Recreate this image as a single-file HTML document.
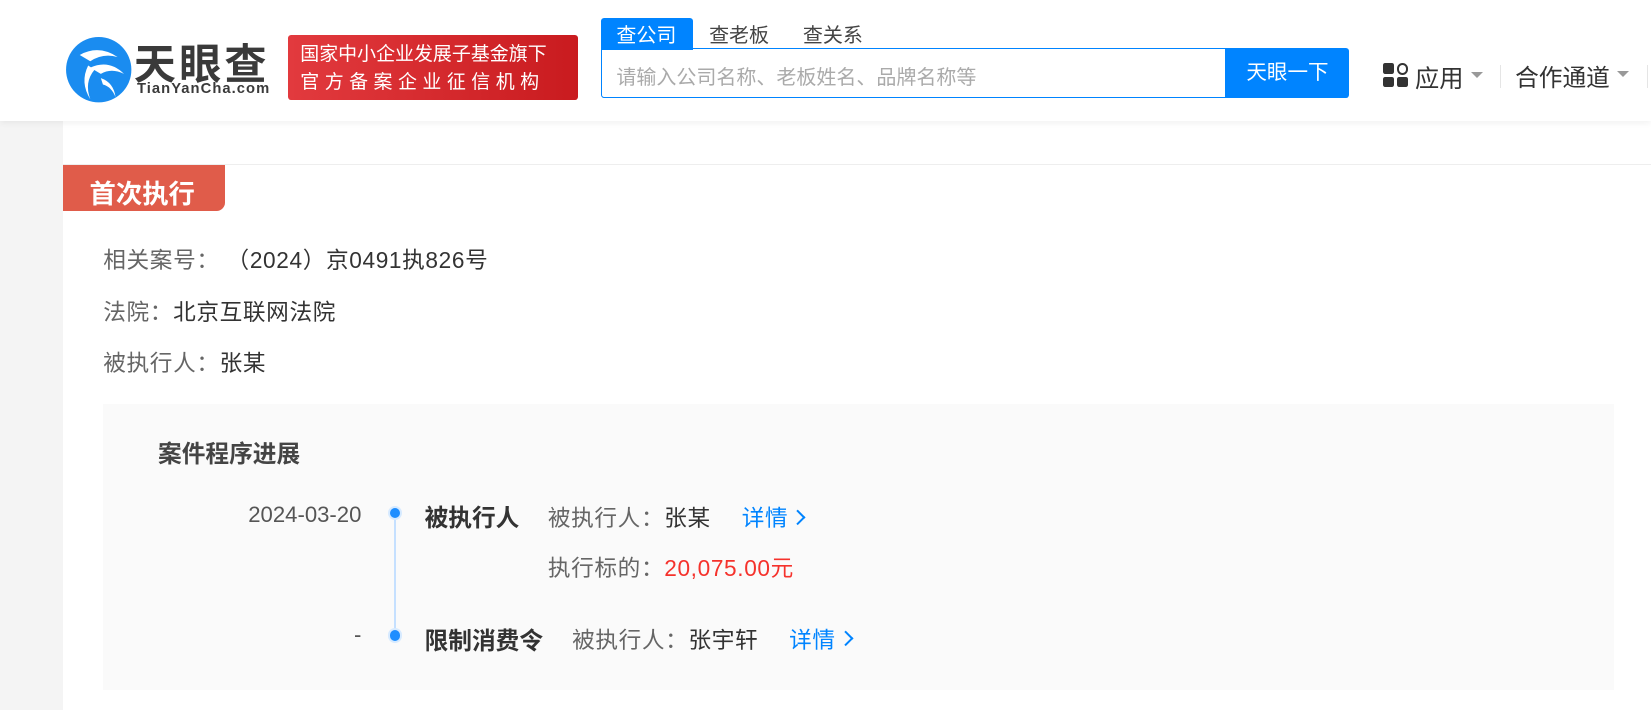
<!DOCTYPE html>
<html><head><meta charset="utf-8"><style>
html,body{margin:0;padding:0;width:1651px;height:710px;overflow:hidden;background:#fff}
#w{position:relative;width:1567px;height:674px;zoom:1.0536;font-family:"Liberation Sans","Noto Sans CJK SC",sans-serif;color:#333}
.a{position:absolute;white-space:nowrap}
.t{font-size:21.5px;letter-spacing:.6px}
.chev{display:inline-block;width:9px;height:9px;border-right:2px solid #0084ff;border-top:2px solid #0084ff;transform:rotate(45deg);margin-left:4px;vertical-align:3px}
</style></head><body><div id="w">
<div class="a" style="left:0;top:115px;width:60px;height:560px;background:#f4f4f4"></div>
<div class="a" style="left:0;top:0;width:1567px;height:115px;background:#fff;box-shadow:0 2px 6px rgba(0,0,0,.06)"></div>
<div class="a" style="left:60px;top:156px;width:1507px;height:1px;background:#eee"></div>
<!-- logo -->
<svg class="a" style="left:62px;top:34px" width="66" height="64" viewBox="0 0 66 64">
<circle cx="32" cy="32" r="31" fill="#1a8cf0"/>
<path d="M14 18 Q32 8 50 20 Q36 16 24 24 Z" fill="#fff"/>
<path d="M24 30 Q42 22 56 36 Q44 30 34 36 Z" fill="#fff"/>
<path d="M22 28 Q14 44 24 60 Q18 44 28 32 Z" fill="#fff"/>
<path d="M34 40 Q46 44 48 58 Q44 48 36 46 Z" fill="#fff"/>
</svg>
<div class="a" style="left:127px;top:29px;font-size:40px;font-weight:bold;color:#3a3a3a;letter-spacing:3px">天眼查</div>
<div class="a" style="left:130px;top:77px;font-size:14px;font-weight:bold;color:#3a3a3a;letter-spacing:1px">TianYanCha.com</div>
<div class="a" style="left:273px;top:33px;width:276px;height:62px;border-radius:3px;background:linear-gradient(90deg,#e23a3e,#c91b1f)"></div>
<div class="a" style="left:285px;top:37px;font-size:18px;color:#fff">国家中小企业发展子基金旗下</div>
<div class="a" style="left:285px;top:64px;font-size:18px;color:#fff;letter-spacing:5.2px">官方备案企业征信机构</div>
<!-- search -->
<div class="a" style="left:570px;top:17px;width:88px;height:30px;background:#0084ff;border-radius:3px 3px 0 0"></div>
<div class="a" style="left:585px;top:18px;font-size:19px;color:#fff">查公司</div>
<div class="a" style="left:673px;top:18px;font-size:19px;color:#444">查老板</div>
<div class="a" style="left:762px;top:18px;font-size:19px;color:#444">查关系</div>
<div class="a" style="left:570px;top:46px;width:594px;height:47px;border:1px solid #0084ff;border-radius:0 0 0 3px;box-sizing:border-box"></div>
<div class="a" style="left:585px;top:58px;font-size:19px;color:#aaa">请输入公司名称、老板姓名、品牌名称等</div>
<div class="a" style="left:1164px;top:46px;width:116px;height:47px;background:#0084ff;border-radius:0 3px 3px 0;color:#fff;font-size:19.5px;text-align:center;line-height:47px">天眼一下</div>
<!-- right nav -->
<div class="a" style="left:1313px;top:60px;width:10px;height:10px;background:#333;border-radius:2px"></div>
<div class="a" style="left:1326px;top:60px;width:7px;height:7px;border:2px solid #333;border-radius:50%"></div>
<div class="a" style="left:1313px;top:73px;width:10px;height:10px;background:#333;border-radius:2px"></div>
<div class="a" style="left:1326px;top:73px;width:10px;height:10px;background:#333;border-radius:2px"></div>
<div class="a" style="left:1343px;top:56px;font-size:23px;color:#333">应用</div>
<div class="a" style="left:1396px;top:68px;width:0;height:0;border-left:6px solid transparent;border-right:6px solid transparent;border-top:6px solid #999"></div>
<div class="a" style="left:1424px;top:62px;width:1px;height:22px;background:#e5e5e5"></div>
<div class="a" style="left:1438px;top:56px;font-size:22.5px;color:#333">合作通道</div>
<div class="a" style="left:1535px;top:67px;width:0;height:0;border-left:6px solid transparent;border-right:6px solid transparent;border-top:6px solid #999"></div>
<div class="a" style="left:1563px;top:62px;width:1px;height:22px;background:#e5e5e5"></div>
<!-- tag -->
<div class="a" style="left:60px;top:157px;width:154px;height:43px;background:#e05c4a;border-radius:0 0 8px 0"></div>
<div class="a" style="left:85px;top:163px;font-size:25px;font-weight:bold;color:#fff">首次执行</div>
<div class="a t" style="left:98px;top:230px"><span style="color:#666">相关案号：</span>&nbsp;（2024）京0491执826号</div>
<div class="a t" style="left:98px;top:279px"><span style="color:#666">法院：</span>北京互联网法院</div>
<div class="a t" style="left:98px;top:327px"><span style="color:#666">被执行人：</span>张某</div>
<!-- box -->
<div class="a" style="left:98px;top:383px;width:1434px;height:272px;background:#fafafa"></div>
<div class="a" style="left:150px;top:413px;font-size:22.5px;font-weight:bold;color:#444">案件程序进展</div>
<div class="a" style="left:343px;top:476px;font-size:21px;color:#555;transform:translateX(-100%)">2024-03-20</div>
<div class="a" style="left:374px;top:487px;width:2px;height:116px;background:#c5e0ff"></div>
<div class="a" style="left:368px;top:480px;width:14px;height:14px;border-radius:50%;background:#d6eaff"></div>
<div class="a" style="left:370px;top:482px;width:10px;height:10px;border-radius:50%;background:#1e8eff"></div>
<div class="a" style="left:368px;top:596px;width:14px;height:14px;border-radius:50%;background:#d6eaff"></div>
<div class="a" style="left:370px;top:598px;width:10px;height:10px;border-radius:50%;background:#1e8eff"></div>
<div class="a" style="left:403px;top:474px;font-size:22.5px;font-weight:bold;color:#333">被执行人</div>
<div class="a t" style="left:520px;top:475px"><span style="color:#666">被执行人：</span>张某</div>
<div class="a t" style="left:704px;top:475px;color:#0084ff">详情<span class="chev"></span></div>
<div class="a t" style="left:520px;top:522px"><span style="color:#666">执行标的：</span><span style="color:#f5322c">20,075.00元</span></div>
<div class="a" style="left:336px;top:590px;font-size:21px;color:#555">-</div>
<div class="a" style="left:403px;top:590px;font-size:22.5px;font-weight:bold;color:#333">限制消费令</div>
<div class="a t" style="left:543px;top:590px"><span style="color:#666">被执行人：</span>张宇轩</div>
<div class="a t" style="left:749px;top:590px;color:#0084ff">详情<span class="chev"></span></div>
</div></body></html>
